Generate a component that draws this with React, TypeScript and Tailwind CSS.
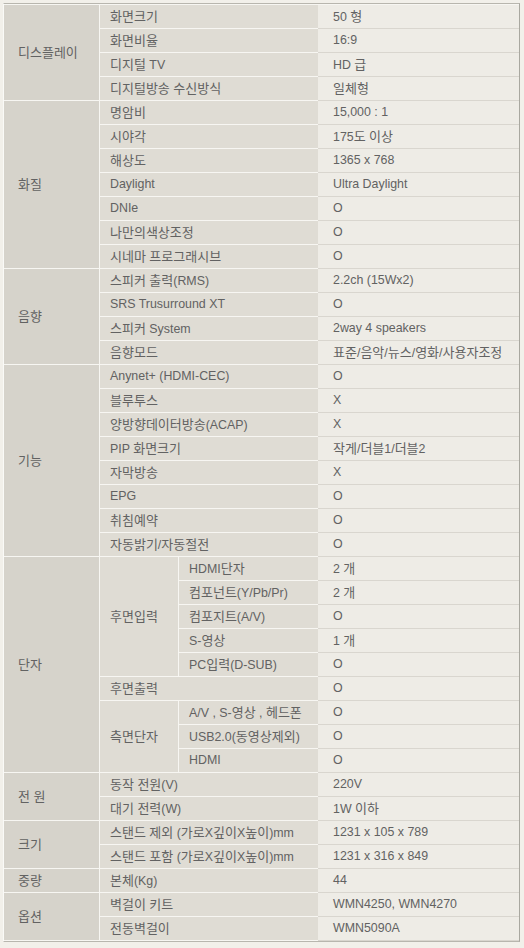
import React from "react";

type Row = { label: string; value: string };
type Sub = { sub: string; rows: Row[] } | { label: string; value: string };
type Group = { name: string; items: Sub[] };

const groups: Group[] = [
  {
    name: "디스플레이",
    items: [
      { label: "화면크기", value: "50 형" },
      { label: "화면비율", value: "16:9" },
      { label: "디지털 TV", value: "HD 급" },
      { label: "디지털방송 수신방식", value: "일체형" },
    ],
  },
  {
    name: "화질",
    items: [
      { label: "명암비", value: "15,000 : 1" },
      { label: "시야각", value: "175도 이상" },
      { label: "해상도", value: "1365 x 768" },
      { label: "Daylight", value: "Ultra Daylight" },
      { label: "DNIe", value: "O" },
      { label: "나만의색상조정", value: "O" },
      { label: "시네마 프로그래시브", value: "O" },
    ],
  },
  {
    name: "음향",
    items: [
      { label: "스피커 출력(RMS)", value: "2.2ch (15Wx2)" },
      { label: "SRS Trusurround XT", value: "O" },
      { label: "스피커 System", value: "2way 4 speakers" },
      { label: "음향모드", value: "표준/음악/뉴스/영화/사용자조정" },
    ],
  },
  {
    name: "기능",
    items: [
      { label: "Anynet+ (HDMI-CEC)", value: "O" },
      { label: "블루투스", value: "X" },
      { label: "양방향데이터방송(ACAP)", value: "X" },
      { label: "PIP 화면크기", value: "작게/더블1/더블2" },
      { label: "자막방송", value: "X" },
      { label: "EPG", value: "O" },
      { label: "취침예약", value: "O" },
      { label: "자동밝기/자동절전", value: "O" },
    ],
  },
  {
    name: "단자",
    items: [
      {
        sub: "후면입력",
        rows: [
          { label: "HDMI단자", value: "2 개" },
          { label: "컴포넌트(Y/Pb/Pr)", value: "2 개" },
          { label: "컴포지트(A/V)", value: "O" },
          { label: "S-영상", value: "1 개" },
          { label: "PC입력(D-SUB)", value: "O" },
        ],
      },
      { label: "후면출력", value: "O" },
      {
        sub: "측면단자",
        rows: [
          { label: "A/V , S-영상 , 헤드폰", value: "O" },
          { label: "USB2.0(동영상제외)", value: "O" },
          { label: "HDMI", value: "O" },
        ],
      },
    ],
  },
  {
    name: "전 원",
    items: [
      { label: "동작 전원(V)", value: "220V" },
      { label: "대기 전력(W)", value: "1W 이하" },
    ],
  },
  {
    name: "크기",
    items: [
      { label: "스탠드 제외 (가로X깊이X높이)mm", value: "1231 x 105 x 789" },
      { label: "스탠드 포함 (가로X깊이X높이)mm", value: "1231 x 316 x 849" },
    ],
  },
  {
    name: "중량",
    items: [{ label: "본체(Kg)", value: "44" }],
  },
  {
    name: "옵션",
    items: [
      { label: "벽걸이 키트", value: "WMN4250, WMN4270" },
      { label: "전동벽걸이", value: "WMN5090A" },
    ],
  },
];

const countRows = (items: Sub[]) =>
  items.reduce((n, it) => n + ("sub" in it ? it.rows.length : 1), 0);

const spanClass: Record<number, string> = {
  1: "row-span-1",
  2: "row-span-2",
  3: "row-span-3",
  4: "row-span-4",
  5: "row-span-5",
  6: "row-span-6",
  7: "row-span-7",
  8: "row-span-8",
  9: "row-span-9",
  10: "row-span-10",
};

function T({ text }: { text: string }) {
  const parts = text.split(/([\uAC00-\uD7A3]+)/);
  return (
    <span className="whitespace-pre">
      {parts.map((p, i) =>
        /[\uAC00-\uD7A3]/.test(p) ? (
          <span key={i} className="text-[13px]">
            {p}
          </span>
        ) : (
          <span key={i}>{p}</span>
        )
      )}
    </span>
  );
}

const groupCls =
  "col-start-1 flex items-center pl-[14px] bg-[#d6d3cb] border-b border-r border-[#f7f6f2]";
const labelCls = "flex items-center pl-[10px] bg-[#dfdcd4] border-b border-[#f7f6f2]";
const valueCls =
  "col-start-4 flex items-center pl-[15px] bg-[#eeece6] border-b border-[#d9d6cf]";

export default function App() {
  const cells: React.ReactNode[] = [];
  groups.forEach((g, gi) => {
    const n = countRows(g.items);
    cells.push(
      <div key={`g${gi}`} className={`${spanClass[n]} ${groupCls}`}>
        <T text={g.name} />
      </div>
    );
    g.items.forEach((it, ii) => {
      if ("sub" in it) {
        cells.push(
          <div
            key={`s${gi}-${ii}`}
            className={`${spanClass[it.rows.length]} col-start-2 border-r ${labelCls}`}
          >
            <T text={it.sub} />
          </div>
        );
        it.rows.forEach((r, ri) => {
          cells.push(
            <div key={`sl${gi}-${ii}-${ri}`} className={`col-start-3 ${labelCls}`}>
              <T text={r.label} />
            </div>
          );
          cells.push(
            <div key={`sv${gi}-${ii}-${ri}`} className={valueCls}>
              <T text={r.value} />
            </div>
          );
        });
      } else {
        cells.push(
          <div key={`l${gi}-${ii}`} className={`col-start-2 col-span-2 ${labelCls}`}>
            <T text={it.label} />
          </div>
        );
        cells.push(
          <div key={`v${gi}-${ii}`} className={valueCls}>
            <T text={it.value} />
          </div>
        );
      }
    });
  });

  return (
    <div
      className="w-[524px] h-[948px] bg-[#f2f0ea] pt-[3px] pl-[3px] text-[12.4px] leading-none text-[#626262]"
      style={{ fontFamily: '"Liberation Sans", "Noto Sans CJK KR", sans-serif' }}
    >
      <div className="w-[517px] border-t border-b border-r border-l border-t-[#b8b6ae] border-b-[#b8b6ae] border-r-[#a9a8a0] border-l-[#fafaf7]">
        <div className="grid grid-cols-[96px_79px_139px_201px] auto-rows-[24px] grid-flow-row-dense border-t border-[#f7f6f2]">
          {cells}
        </div>
      </div>
    </div>
  );
}
